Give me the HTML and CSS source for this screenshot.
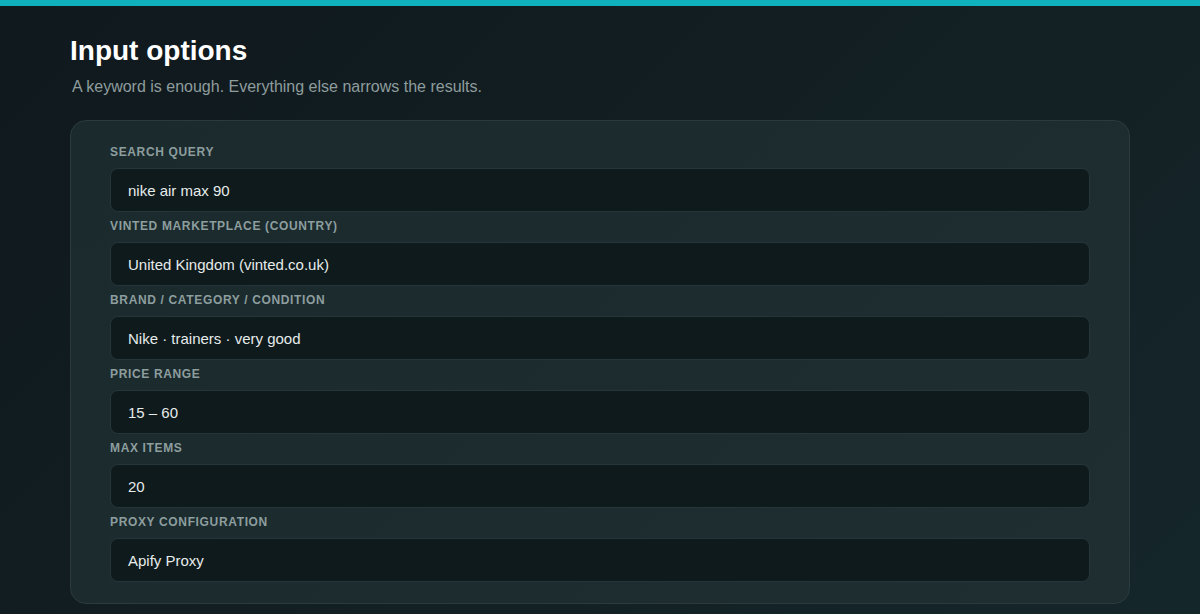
FILE: index.html
```html
<!DOCTYPE html>
<html lang="en">
<head>
<meta charset="utf-8">
<title>Input options</title>
<link rel="stylesheet" href="styles.css">
</head>
<body>
<div class="topbar"></div>
<main class="page">
  <h1 class="title">Input options</h1>
  <p class="subtitle">A keyword is enough. Everything else narrows the results.</p>
  <section class="card">
    <div class="field">
      <div class="label">Search query</div>
      <div class="input">nike air max 90</div>
    </div>
    <div class="field">
      <div class="label">Vinted marketplace (country)</div>
      <div class="input">United Kingdom (vinted.co.uk)</div>
    </div>
    <div class="field">
      <div class="label">Brand / category / condition</div>
      <div class="input">Nike · trainers · very good</div>
    </div>
    <div class="field">
      <div class="label">Price range</div>
      <div class="input">15 – 60</div>
    </div>
    <div class="field">
      <div class="label">Max items</div>
      <div class="input">20</div>
    </div>
    <div class="field">
      <div class="label">Proxy configuration</div>
      <div class="input">Apify Proxy</div>
    </div>
  </section>
</main>
</body>
</html>
```

FILE: styles.css
```css
* { box-sizing: border-box; }
html, body {
  margin: 0;
  height: 100%;
}
body {
  font-family: "Liberation Sans", Arial, Helvetica, sans-serif;
  background: linear-gradient(135deg, #10191d 0%, #121e22 45%, #15262a 100%);
  color: #e8eded;
  overflow: hidden;
}
.topbar {
  height: 6px;
  background: #0fb1bc;
}
.page {
  width: 1060px;
  margin-left: 70px;
  padding-top: 28px;
}
.title {
  margin: 0;
  font-size: 28px;
  line-height: 34px;
  font-weight: 700;
  color: #ffffff;
}
.subtitle {
  margin: 9px 0 0 2px;
  font-size: 16px;
  line-height: 20px;
  color: #8e9c9d;
}
.card {
  margin-top: 23px;
  border: 1px solid #2a3a3d;
  border-radius: 16px;
  background: linear-gradient(135deg, #1b2a2d 0%, #1d2c2f 60%, #1e2e31 100%);
  padding: 21px 39px 21px 39px;
  display: flex;
  flex-direction: column;
  gap: 4px;
}
.field {
  display: flex;
  flex-direction: column;
  gap: 7px;
}
.label {
  padding-top: 1px;
  font-size: 12px;
  line-height: 18px;
  font-weight: 700;
  text-transform: uppercase;
  letter-spacing: 0.65px;
  color: #8d9e9e;
}
.input {
  height: 44px;
  border: 1px solid #25353a;
  border-radius: 8px;
  background: #0e1a1b;
  padding: 0 17px;
  display: flex;
  align-items: center;
  font-size: 15px;
  color: #e6ebeb;
}
```
